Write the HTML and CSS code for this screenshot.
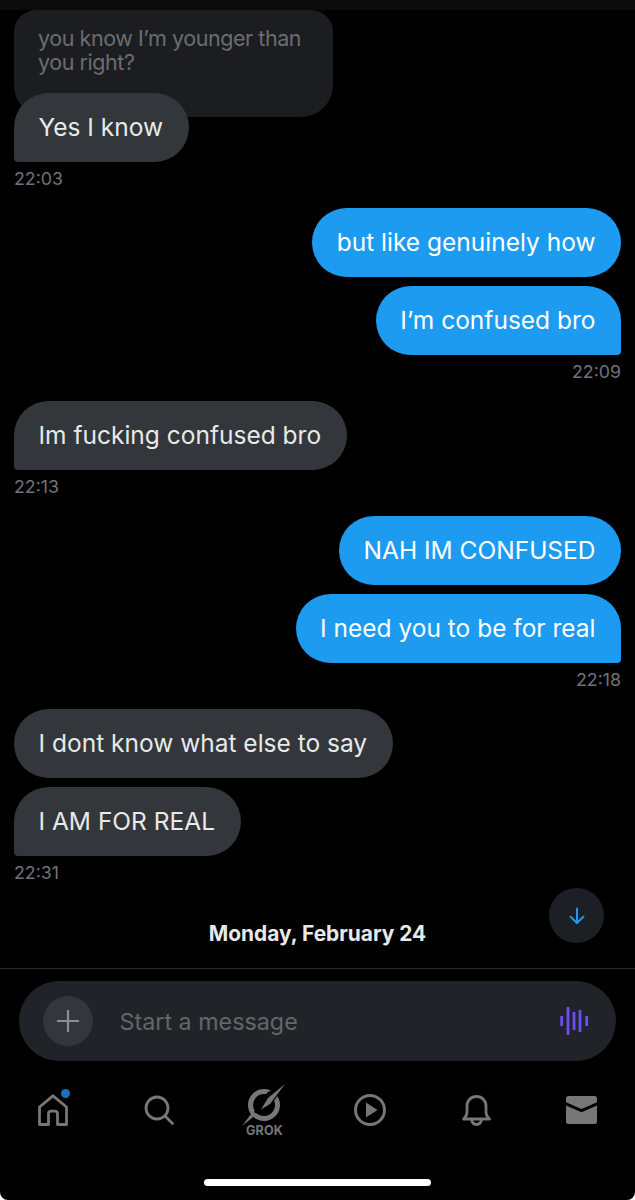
FILE: index.html
```html
<!DOCTYPE html>
<html lang="en">
<head>
<meta charset="utf-8">
<title>Messages</title>
<link rel="stylesheet" href="styles.css">
</head>
<body>
<div class="screen">
  <div class="topbar"></div>
  <main class="thread">
    <div class="quote"><p>you know I’m younger than<br>you right?</p></div>
    <div class="bubble in tail overlap">Yes I know</div>
    <div class="time">22:03</div>

    <div class="bubble out first">but like genuinely how</div>
    <div class="bubble out tail">I’m confused bro</div>
    <div class="time right">22:09</div>

    <div class="bubble in tail first">Im fucking confused bro</div>
    <div class="time">22:13</div>

    <div class="bubble out first">NAH IM CONFUSED</div>
    <div class="bubble out tail">I need you to be for real</div>
    <div class="time right">22:18</div>

    <div class="bubble in first">I dont know what else to say</div>
    <div class="bubble in tail">I AM FOR REAL</div>
    <div class="time">22:31</div>

    <div class="date">Monday, February 24</div>
    <button class="scroll-down" aria-label="Scroll down">
      <svg width="20" height="20" viewBox="0 0 20 20" fill="none" stroke="#1d9bf0" stroke-width="2" stroke-linecap="round" stroke-linejoin="round"><path d="M10 2.500V17"/><path d="M3.600 10.800 10 17l6.400-6.200"/></svg>
    </button>
  </main>

  <section class="composer-wrap">
    <div class="composer">
      <span class="plus">
        <svg width="22" height="22" viewBox="0 0 22 22" fill="none" stroke="#8a8d91" stroke-width="2.200"><path d="M11 0v22M0 11h22"/></svg>
      </span>
      <span class="placeholder">Start a message</span>
      <svg class="voice" width="30" height="30" viewBox="0 0 30 30" fill="none" stroke="#6d4ff0" stroke-width="2.800"><path d="M2.700 10v10M9 1v28M15 6v18M21 4v22M27.700 10v10"/></svg>
    </div>
  </section>

  <nav class="tabs">
    <a class="tab home">
      <svg width="30" height="32" viewBox="0 0 30 32" fill="none" stroke="#777" stroke-width="2.800" stroke-linejoin="round"><path d="M1.500 13 15 1.800 28.500 13v17.500H19.500V20q0-2.800-2.800-2.800h-3.400q-2.800 0-2.800 2.800v10.500H1.500z"/></svg>
      <span class="dot"></span>
    </a>
    <a class="tab">
      <svg width="30" height="30" viewBox="0 0 30 30" fill="none" stroke="#777" stroke-width="2.800" stroke-linecap="round"><circle cx="13" cy="13" r="11"/><path d="M21 21 28.500 28.500"/></svg>
    </a>
    <a class="tab grok">
      <svg width="44" height="43" viewBox="0 0 44 43" fill="none"><circle cx="22" cy="21" r="13.500" stroke="#777" stroke-width="5"/><path d="M44 0 29 21 18 29 11 30 0 43l15-19 2-7 9-9z" fill="#000"/><path d="M43 0 28 20 19 25.500 26 14z" fill="#777"/><path d="M0 42 11 27.500 15 30z" fill="#777"/></svg>
      <span class="grok-label">GROK</span>
    </a>
    <a class="tab">
      <svg width="32" height="32" viewBox="0 0 32 32" fill="none"><circle cx="16" cy="16" r="14.500" stroke="#777" stroke-width="3"/><path d="M12 8.500 23.500 16 12 23.500z" fill="#777"/></svg>
    </a>
    <a class="tab">
      <svg width="29" height="31" viewBox="0 0 29 31" fill="none" stroke="#777" stroke-width="2.800" stroke-linejoin="round"><path d="M1.500 24c2.500-2 3.500-4 3.500-7.500V11C5 5.500 9 1.500 14.500 1.500S24 5.500 24 11v5.500c0 3.500 1 5.500 3.500 7.500z"/><path d="M9.500 24.500c.5 3.500 2.500 5 5 5s4.500-1.500 5-5"/></svg>
    </a>
    <a class="tab">
      <svg width="31" height="28" viewBox="0 0 31 28"><path d="M2.500 0h26A2.500 2.500 0 0 1 31 2.500v3.800L15.500 13 0 6.300V2.500A2.500 2.500 0 0 1 2.500 0z" fill="#777"/><path d="M0 9.500 15.500 16.200 31 9.500v16a2.500 2.500 0 0 1-2.500 2.500h-26A2.500 2.500 0 0 1 0 25.500z" fill="#777"/></svg>
    </a>
  </nav>
  <div class="indicator-wrap"><div class="indicator"></div></div>
</div>
</body>
</html>
```

FILE: styles.css
```css
* { box-sizing: border-box; }
html, body { margin: 0; padding: 0; background: #fff; }
body { font-family: Inter, "Liberation Sans", sans-serif; }
.screen { width: 635px; height: 1200px; display: flex; flex-direction: column; overflow: hidden; background: #000; border-radius: 0 0 8px 8px; }
.topbar { height: 10px; background: #0b0b0c; flex: none; }
.thread { position: relative; height: 959px; padding: 0 14px; display: flex; flex-direction: column; flex: none; border-bottom: 1px solid #2a2b2d; }
.quote { width: 319px; height: 107px; background: #1c1d20; border-radius: 22px 22px 32px 32px; padding: 16px 24px 0; color: #6a6d71; font-size: 21.500px; line-height: 24px; letter-spacing: -.44px; white-space: nowrap; }
.quote p { margin: 0; }
.bubble { height: 69px; display: flex; align-items: center; padding: 0 25.500px 2px 24.500px; font-size: 24.500px; color: #e7e9ea; border-radius: 34.500px; width: fit-content; white-space: nowrap; margin-top: 9px; }
.bubble.in { background: #33363a; }
.bubble.out { background: #1d9bf0; color: #fff; align-self: flex-end; }
.bubble.in.tail { border-bottom-left-radius: 4px; }
.bubble.out.tail { border-bottom-right-radius: 4px; }
.bubble.overlap { margin-top: -24px; }
.bubble.first { margin-top: 0; }
.time { font-size: 17.800px; line-height: 21px; color: #6f7377; margin: 6px 0 19px; }
.time.right { align-self: flex-end; }
.date { font-size: 20.900px; font-weight: 700; color: #e7e9ea; text-align: center; line-height: 24px; margin-top: 20px; }
.scroll-down { position: absolute; left: 549px; top: 878px; width: 55px; height: 55px; border-radius: 50%; background: #1c1f23; border: none; padding: 0; display: flex; align-items: center; justify-content: center; }
.composer-wrap { padding: 12px 19px 0; flex: none; }
.composer { width: 597px; height: 80px; border-radius: 40px; background: #202327; display: flex; align-items: center; padding: 0 27px 0 24px; }
.plus { width: 50px; height: 50px; border-radius: 50%; background: #33363a; display: flex; align-items: center; justify-content: center; flex: none; }
.placeholder { margin-left: 26.500px; font-size: 23.300px; color: #63666a; flex: 1; }
.voice { flex: none; }
.tabs { margin-top: 14px; height: 70px; flex: none; display: grid; grid-template-columns: repeat(6, 105.800px); align-items: center; justify-items: center; }
.tab { position: relative; display: flex; flex-direction: column; align-items: center; }
.dot { position: absolute; top: -5px; right: -2px; width: 9px; height: 9px; border-radius: 50%; background: #1d6fb8; }
.grok-label { font-size: 12.500px; line-height: 13px; font-weight: 700; color: #777; margin-top: -3px; letter-spacing: .2px; }
.indicator-wrap { flex: 1; display: flex; justify-content: center; padding-top: 34px; }
.indicator { width: 227px; height: 7px; border-radius: 4px; background: #fff; }
```
